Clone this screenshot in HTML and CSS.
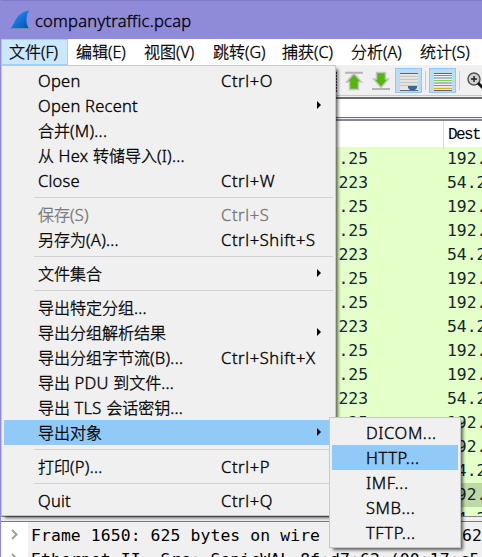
FILE: index.html
```
<!DOCTYPE html>
<html lang="zh-CN">
<head>
<meta charset="utf-8">
<title>companytraffic.pcap</title>
<link rel="stylesheet" href="styles.css">
</head>
<body>
<div class="window">
  <header class="titlebar">
    <svg class="fin" width="20" height="20" viewBox="0 0 20 20">
      <defs><linearGradient id="fin" x1="0" y1="0" x2="1" y2="1"><stop offset="0" stop-color="#4a9bea"/><stop offset=".5" stop-color="#1474dc"/><stop offset="1" stop-color="#0650a8"/></linearGradient></defs>
      <path d="M1 18C5 14 5 3 19 .5C15.500 6 16 13 18.500 18Z" fill="url(#fin)"/>
      <path d="M0 18.500H20" stroke="#7089bd"/>
    </svg>
    <span class="title">companytraffic.pcap</span>
  </header>
  <nav class="menubar">
    <span class="menu active">文件(F)</span><span class="menu edit">编辑(E)</span><span class="menu view">视图(V)</span><span class="menu go">跳转(G)</span><span class="menu capture">捕获(C)</span><span class="menu analyze">分析(A)</span><span class="menu stats">统计(S)</span>
  </nav>
  <div class="toolbar">
    <svg width="148" height="31" viewBox="334 65 148 31">
      <path d="M336 72v20" stroke="#444" stroke-width="2" stroke-dasharray="2 1"/>
      <path d="M345 72.700h18M372 89h18" stroke="#b4b4b4" stroke-width="2"/>
      <path d="M354 73.500L361.500 82H358.500V89.500H349.500V82H346.500Z" fill="#53b70c" stroke="#c5c5c5" stroke-width="1.500"/>
      <path d="M376.500 72.500H385.500V79H388.500L381 87.500L373.500 79H376.500Z" fill="#53b70c" stroke="#c5c5c5" stroke-width="1.500"/>
      <rect x="395.500" y="68.500" width="26" height="24" fill="#bddcf4" stroke="#90c8f6"/>
      <rect x="400" y="73" width="18" height="18" fill="#e4e5df"/>
      <path d="M400 73.500h18M400 90.500h18" stroke="#666"/>
      <path d="M400 76.500h18M400 79.500h18M400 82.500h18M400 85.500h18" stroke="#c4c6bf"/>
      <path d="M408 86H417V88L414.500 90.500H410.500L408 88Z" fill="#3467a8"/>
      <path d="M425.500 71v19M459.500 71v19" stroke="#ccc"/>
      <rect x="429.500" y="68.500" width="26" height="24" fill="#bddcf4" stroke="#90c8f6"/>
      <rect x="434" y="73" width="18" height="18" fill="#f0f1ec"/>
      <path d="M434 73.500h18M434 90.500h18" stroke="#666"/>
      <path d="M434 75.500h18" stroke="#ef6262"/><path d="M434 78h18" stroke="#6584bd"/><path d="M434 80.500h18" stroke="#75d83c"/><path d="M434 83h18" stroke="#6386bd"/><path d="M434 85.500h18" stroke="#9985ae"/><path d="M434 88.500h18" stroke="#d7b52a" stroke-width="1.500"/>
      <circle cx="474" cy="79" r="6" fill="#d2d2d2" stroke="#555" stroke-width="1.500"/>
      <path d="M471 79h6M474 76v6" stroke="#222" stroke-width="1.500"/><path d="M478 83L485 90" stroke="#111" stroke-width="3"/>
    </svg>
  </div>
  <div class="filter"></div>
  <section class="packets">
    <div class="head"><span></span><span class="dest">Dest</span></div>
    <div class="row"><span>.25</span><span>192.</span></div>
    <div class="row"><span>223</span><span>54.2</span></div>
    <div class="row"><span>.25</span><span>192.</span></div>
    <div class="row"><span>.25</span><span>192.</span></div>
    <div class="row"><span>223</span><span>54.2</span></div>
    <div class="row"><span>.25</span><span>192.</span></div>
    <div class="row"><span>.25</span><span>192.</span></div>
    <div class="row"><span>223</span><span>54.2</span></div>
    <div class="row"><span>.25</span><span>192.</span></div>
    <div class="row"><span>.25</span><span>192.</span></div>
    <div class="row"><span>223</span><span>54.2</span></div>
    <div class="row"><span>.25</span><span>192.</span></div>
    <div class="row"><span></span><span>192.</span></div>
    <div class="row"><span></span><span>54.2</span></div>
    <div class="row selected"><span></span><span>192.</span></div>
    <div class="row"><span></span><span>54.2</span></div>
  </section>
  <section class="details">
    <div class="line"><svg class="chev" width="26" height="24" viewBox="0 0 26 24"><path d="M10.500 8L15 12.500L10.500 17" fill="none" stroke="#a0a0a0" stroke-width="2"/></svg><span class="code">Frame 1650: 625 bytes on wire</span><span class="code bits">62</span></div>
    <div class="line"><svg class="chev" width="26" height="24" viewBox="0 0 26 24"><path d="M10.500 8L15 12.500L10.500 17" fill="none" stroke="#a0a0a0" stroke-width="2"/></svg><span class="code">Ethernet II, Src: SonicWAL_8f:d7:62 (00:17:c5</span></div>
  </section>
</div>

<div class="popup file-menu">
  <div class="item"><span><i>Open</i></span><kbd>Ctrl+O</kbd></div>
  <div class="item sub"><span><i>Open Recent</i></span></div>
  <div class="item"><span>合并<i>(M)...</i></span></div>
  <div class="item"><span>从<i> Hex </i>转储导入<i>(I)...</i></span></div>
  <div class="item"><span><i>Close</i></span><kbd>Ctrl+W</kbd></div>
  <hr>
  <div class="item disabled"><span>保存<i>(S)</i></span><kbd>Ctrl+S</kbd></div>
  <div class="item"><span>另存为<i>(A)...</i></span><kbd>Ctrl+Shift+S</kbd></div>
  <hr>
  <div class="item sub"><span>文件集合</span></div>
  <hr>
  <div class="item"><span>导出特定分组<i>...</i></span></div>
  <div class="item sub"><span>导出分组解析结果</span></div>
  <div class="item"><span>导出分组字节流<i>(B)...</i></span><kbd>Ctrl+Shift+X</kbd></div>
  <div class="item"><span>导出<i> PDU </i>到文件<i>...</i></span></div>
  <div class="item"><span>导出<i> TLS </i>会话密钥<i>...</i></span></div>
  <div class="item sub hover"><span>导出对象</span></div>
  <hr>
  <div class="item"><span>打印<i>(P)...</i></span><kbd>Ctrl+P</kbd></div>
  <hr>
  <div class="item"><span><i>Quit</i></span><kbd>Ctrl+Q</kbd></div>
</div>
<div class="popup export-menu">
  <div class="item"><span>DICOM...</span></div>
  <div class="item hover"><span>HTTP...</span></div>
  <div class="item"><span>IMF...</span></div>
  <div class="item"><span>SMB...</span></div>
  <div class="item"><span>TFTP...</span></div>
</div>
</body>
</html>
```
FILE: styles.css
```
* { box-sizing: border-box; }
html, body { margin: 0; width: 482px; height: 557px; overflow: hidden; }
body { position: relative; background: #f0f0f0; color: #000; font: 300 16px/25px "Noto Sans", "Noto Sans CJK SC", sans-serif; -webkit-text-stroke: .35px; white-space: nowrap; }
.window { height: 557px; border-left: 1px solid #908bd9; display: flex; flex-direction: column; overflow: hidden; }
.titlebar { flex: none; height: 39px; background: #908bd9; border-top: 1px solid #827dc9; display: flex; align-items: center; padding-left: 9px; }
.title { margin-left: 5px; font-size: 16.5px; letter-spacing: .25px; }
.menubar { flex: none; height: 26px; background: #fff; display: flex; }
.menu { flex: none; width: 68px; padding-left: 8px; line-height: 27px; }
.menu.active { width: 67px; padding-left: 7px; background: #cce8ff; border: 1px solid #99d1ff; line-height: 25px; }
.menu.view, .menu.go, .menu.capture, .menu.analyze { width: 69px; }
.menu.stats { width: 60px; }
.toolbar { flex: none; height: 31px; display: flex; justify-content: flex-end; background: #f0f0f0; border-bottom: 1px solid #c6c6c6; }
.filter { flex: none; height: 21px; margin-top: 1px; background: #fff; border: solid #6c6c6c; border-width: 2px 0 1px; }
.packets { flex: none; height: 398px; margin-top: 1px; border-top: 2px solid #85868d; border-bottom: 1px solid #85868d; overflow: hidden; background: #fff; }
.head, .row { display: grid; grid-template-columns: 442px minmax(0, 1fr); }
.head { height: 26px; }
.dest { border-left: 1px solid #dcdcdc; padding-left: 4px; font: 16px/29px "Liberation Mono", monospace; letter-spacing: -1.6px; -webkit-text-stroke: 0; }
.row { height: 24px; background: #e4ffc7; color: #12272e; font: 16.4px/23px "DejaVu Sans Mono", monospace; -webkit-text-stroke: 0; }
.row span:first-child { text-align: right; padding-right: 75px; }
.row span:last-child { padding-left: 4px; }
.row.selected { background: #bfd9a6; }
.details { flex: 1; margin-top: 4px; border-top: 1px solid #777985; overflow: hidden; }
.line { height: 24px; display: flex; }
.chev { flex: none; width: 27px; background: #fff; }
.code { padding-left: 3px; font: 16.4px/27px "DejaVu Sans Mono", monospace; letter-spacing: .1px; -webkit-text-stroke: 0; }
.bits { margin-left: auto; }
.popup { position: absolute; background: #f0f0f0; border: 1px solid #c8c8c8; padding: 2px; box-shadow: 3px 3px 3px -1px rgba(0,0,0,.6); }
.file-menu { left: 1px; top: 65px; width: 335px; height: 451px; }
.export-menu { left: 329px; top: 417px; width: 132px; height: 131px; }
.item { height: 25px; display: grid; grid-template-columns: 183px 1fr; padding-left: 34px; position: relative; line-height: 26px; }
.item i { font-style: normal; font-size: 16.5px; letter-spacing: .25px; line-height: 1; }
.item kbd { font: inherit; font-size: 16.5px; letter-spacing: .6px; }
.export-menu .item { font-size: 16.5px; letter-spacing: .6px; }
.item.disabled { color: #777; }
.item.hover { background: #91c9f7; }
.item.sub::after { content: ""; position: absolute; right: 12px; top: 8px; border-left: 4px solid #000; border-top: 4px solid transparent; border-bottom: 4px solid transparent; }
hr { border: 0; height: 1px; background: #d2d2d2; margin: 4px 0 4px 30px; }
```
